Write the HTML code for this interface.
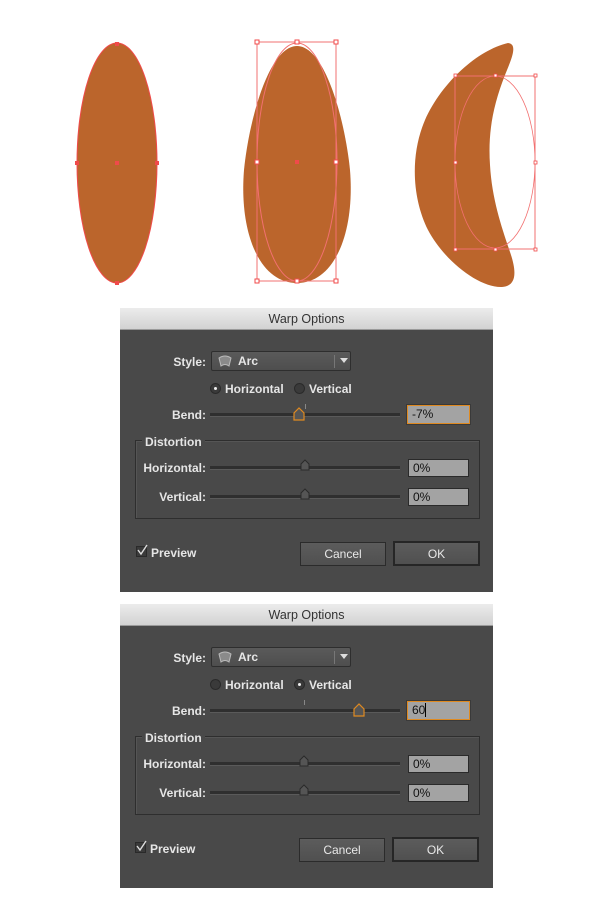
<!DOCTYPE html>
<html><head><meta charset="utf-8"><style>
*{margin:0;padding:0;box-sizing:border-box}
body{width:600px;height:897px;background:#fff;position:relative;overflow:hidden;font-family:"Liberation Sans",sans-serif}
.dlg{position:absolute;left:120px;width:373px;height:284px;background:#494949}
.dlg *{position:absolute}
.title{left:0;top:0;width:373px;height:22px;background:linear-gradient(#ececec,#d2d2d2);border-bottom:1px solid #9a9a9a;color:#333;font-size:12.5px;text-align:center;line-height:22px}
.lbl{color:#e6e6e6;font-size:12px;font-weight:bold;line-height:14px;white-space:nowrap}
.r{text-align:right;width:120px;left:0}
.dd{left:91px;top:43px;width:140px;height:20px;background:linear-gradient(#5a5a5a,#4e4e4e);border:1px solid #2e2e2e;border-radius:2px}
.track{height:4px;background:#2f2f2f;border-bottom:1px solid #5a5a5a;left:90px;width:190px}
.inp{left:288px;width:61px;height:18px;background:#a3a3a3;border:1px solid #2a2a2a;color:#111;font-size:12px;line-height:16px;padding-left:4px}
.inp.o{border:1px solid #e08a20;outline:1px solid #3a3a3a;height:19px;left:287px;width:63px}
.rad{width:11px;height:11px;border-radius:50%;background:#3a3a3a;border:1px solid #2a2a2a}
.rad.on::after{content:"";position:absolute;left:3px;top:3px;width:3px;height:3px;border-radius:50%;background:#eee}
.grp{left:15px;top:132px;width:345px;height:79px;border:1px solid #2e2e2e;box-shadow:inset 1px 1px 0 #555}
.btn{height:24px;background:linear-gradient(#5c5c5c,#505050);border:1px solid #2b2b2b;color:#e8e8e8;font-size:12px;text-align:center;line-height:22px}
</style></head><body>
<svg width="600" height="300" style="position:absolute;left:0;top:0">
<ellipse cx="117" cy="163" rx="40" ry="120" fill="#bb652c" stroke="#f04a4a" stroke-width="1"/>
<g fill="#f04a4a"><rect x="115" y="42" width="4" height="4"/><rect x="115" y="281" width="4" height="4"/><rect x="75" y="161" width="4" height="4"/><rect x="155" y="161" width="4" height="4"/><rect x="115" y="161" width="4" height="4"/></g>
<path d="M297 46 C325 46 345 120 350 170 C355 232 335 283 297 283 C259 283 239 232 244 170 C249 120 269 46 297 46Z" fill="#bb652c"/>
<ellipse cx="297" cy="162" rx="40" ry="119" fill="none" stroke="#f27070" stroke-width="1"/>
<rect x="257" y="42" width="79" height="239" fill="none" stroke="#f27070" stroke-width="1"/>
<g fill="#fff" stroke="#f04a4a"><rect x="255" y="40" width="4" height="4"/><rect x="295" y="40" width="4" height="4"/><rect x="334" y="40" width="4" height="4"/><rect x="255" y="160" width="4" height="4"/><rect x="334" y="160" width="4" height="4"/><rect x="255" y="279" width="4" height="4"/><rect x="295" y="279" width="4" height="4"/><rect x="334" y="279" width="4" height="4"/></g>
<rect x="295" y="160" width="4" height="4" fill="#f04a4a"/>
<path d="M508 43 C518 44 512 58 505 75 C492 108 488 135 490 165 C492 200 502 228 510 252 C518 275 515 286 502 287 C480 288 445 262 428 230 C412 198 410 155 425 120 C442 82 478 50 508 43Z" fill="#bb652c"/>
<rect x="455" y="76" width="80" height="173" fill="none" stroke="#f27070" stroke-width="1"/>
<ellipse cx="495" cy="162" rx="40" ry="86" fill="none" stroke="#f27070" stroke-width="0.8"/>
<g fill="#fff" stroke="#f04a4a" stroke-width="0.8"><rect x="454" y="74" width="3" height="3"/><rect x="494" y="74" width="3" height="3"/><rect x="534" y="74" width="3" height="3"/><rect x="454" y="161" width="3" height="3"/><rect x="534" y="161" width="3" height="3"/><rect x="454" y="248" width="3" height="3"/><rect x="494" y="248" width="3" height="3"/><rect x="534" y="248" width="3" height="3"/></g>
</svg>

<div class="dlg" style="top:308px">
<div class="title">Warp Options</div>
<div class="lbl r" style="top:47px;width:86px">Style:</div>
<div class="dd"><svg style="left:6px;top:3px" width="14" height="12"><path d="M1 3 Q7 -1 13 3 L11 11 Q7 8 3 11Z" fill="#8a8a8a" stroke="#bbb"/></svg><span class="lbl" style="left:26px;top:2px;font-weight:bold">Arc</span><div style="left:122px;top:3px;width:1px;height:13px;background:#777"></div><svg style="left:128px;top:6px" width="8" height="6"><path d="M0 0H8L4 5Z" fill="#ddd"/></svg></div>
<div class="rad on" style="left:90px;top:75px"></div><div class="lbl" style="left:105px;top:74px">Horizontal</div>
<div class="rad" style="left:174px;top:75px"></div><div class="lbl" style="left:189px;top:74px">Vertical</div>
<div class="lbl r" style="top:100px;width:86px">Bend:</div>
<div class="track" style="top:105px"></div>
<div style="left:185px;top:96px;width:1px;height:5px;background:#888"></div>
<svg style="left:173px;top:99px" width="12" height="14"><path d="M1 13V6L6 1L11 6V13Z" fill="#555" stroke="#e08a20" stroke-width="1.2"/></svg>
<div class="inp o" style="top:97px">-7%</div>
<div class="grp"></div>
<div class="lbl" style="left:22px;top:127px;background:#494949;padding:0 3px">Distortion</div>
<div class="lbl r" style="top:153px;width:86px">Horizontal:</div>
<div class="track" style="top:158px"></div>
<svg style="left:180px;top:151px" width="10" height="12"><path d="M1 11V5L5 1L9 5V11Z" fill="#555" stroke="#2a2a2a"/></svg>
<div class="inp" style="top:151px">0%</div>
<div class="lbl r" style="top:182px;width:86px">Vertical:</div>
<div class="track" style="top:187px"></div>
<svg style="left:180px;top:180px" width="10" height="12"><path d="M1 11V5L5 1L9 5V11Z" fill="#555" stroke="#2a2a2a"/></svg>
<div class="inp" style="top:180px">0%</div>
<div style="left:16px;top:238px;width:11px;height:11px;background:#3a3a3a;border:1px solid #2a2a2a"></div>
<svg style="left:16px;top:236px" width="12" height="12"><path d="M2 6L5 10L11 1" fill="none" stroke="#ddd" stroke-width="1.4"/></svg>
<div class="lbl" style="left:31px;top:238px">Preview</div>
<div class="btn" style="left:180px;top:234px;width:86px">Cancel</div>
<div class="btn" style="left:273px;top:233px;width:87px;height:25px;border:2px solid #262626">OK</div>
</div>

<div class="dlg" style="top:604px">
<div class="title">Warp Options</div>
<div class="lbl r" style="top:47px;width:86px">Style:</div>
<div class="dd"><svg style="left:6px;top:3px" width="14" height="12"><path d="M1 3 Q7 -1 13 3 L11 11 Q7 8 3 11Z" fill="#8a8a8a" stroke="#bbb"/></svg><span class="lbl" style="left:26px;top:2px">Arc</span><div style="left:122px;top:3px;width:1px;height:13px;background:#777"></div><svg style="left:128px;top:6px" width="8" height="6"><path d="M0 0H8L4 5Z" fill="#ddd"/></svg></div>
<div class="rad" style="left:90px;top:75px"></div><div class="lbl" style="left:105px;top:74px">Horizontal</div>
<div class="rad on" style="left:174px;top:75px"></div><div class="lbl" style="left:189px;top:74px">Vertical</div>
<div class="lbl r" style="top:100px;width:86px">Bend:</div>
<div class="track" style="top:105px"></div>
<div style="left:184px;top:96px;width:1px;height:5px;background:#888"></div>
<svg style="left:233px;top:99px" width="12" height="14"><path d="M1 13V6L6 1L11 6V13Z" fill="#555" stroke="#e08a20" stroke-width="1.2"/></svg>
<div class="inp o" style="top:97px">60<span style="position:static;border-left:1px solid #000"></span></div>
<div class="grp"></div>
<div class="lbl" style="left:22px;top:127px;background:#494949;padding:0 3px">Distortion</div>
<div class="lbl r" style="top:153px;width:86px">Horizontal:</div>
<div class="track" style="top:158px"></div>
<svg style="left:179px;top:151px" width="10" height="12"><path d="M1 11V5L5 1L9 5V11Z" fill="#555" stroke="#2a2a2a"/></svg>
<div class="inp" style="top:151px">0%</div>
<div class="lbl r" style="top:182px;width:86px">Vertical:</div>
<div class="track" style="top:187px"></div>
<svg style="left:179px;top:180px" width="10" height="12"><path d="M1 11V5L5 1L9 5V11Z" fill="#555" stroke="#2a2a2a"/></svg>
<div class="inp" style="top:180px">0%</div>
<div style="left:15px;top:238px;width:11px;height:11px;background:#3a3a3a;border:1px solid #2a2a2a"></div>
<svg style="left:15px;top:236px" width="12" height="12"><path d="M2 6L5 10L11 1" fill="none" stroke="#ddd" stroke-width="1.4"/></svg>
<div class="lbl" style="left:30px;top:238px">Preview</div>
<div class="btn" style="left:179px;top:234px;width:86px">Cancel</div>
<div class="btn" style="left:272px;top:233px;width:87px;height:25px;border:2px solid #262626">OK</div>
</div>
</body></html>
